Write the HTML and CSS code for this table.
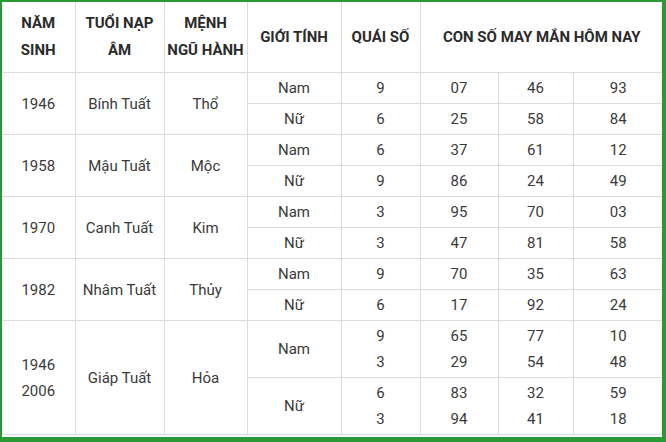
FILE: index.html
```html
<!DOCTYPE html>
<html lang="vi">
<head>
<meta charset="utf-8">
<link rel="stylesheet" href="styles.css">
</head>
<body>
<div class="frame">
<table class="lucky">
  <colgroup>
    <col class="c1"><col class="c2"><col class="c3"><col class="c4"><col class="c5"><col class="c6"><col class="c7"><col class="c8">
  </colgroup>
  <thead>
    <tr>
      <th>NĂM<br>SINH</th>
      <th>TUỔI NẠP<br>ÂM</th>
      <th>MỆNH<br>NGŨ HÀNH</th>
      <th>GIỚI TÍNH</th>
      <th>QUÁI SỐ</th>
      <th colspan="3">CON SỐ MAY MẮN HÔM NAY</th>
    </tr>
  </thead>
  <tbody>
    <tr><td rowspan="2">1946</td><td rowspan="2">Bính Tuất</td><td rowspan="2">Thổ</td><td>Nam</td><td>9</td><td>07</td><td>46</td><td>93</td></tr>
    <tr><td>Nữ</td><td>6</td><td>25</td><td>58</td><td>84</td></tr>
    <tr><td rowspan="2">1958</td><td rowspan="2">Mậu Tuất</td><td rowspan="2">Mộc</td><td>Nam</td><td>6</td><td>37</td><td>61</td><td>12</td></tr>
    <tr><td>Nữ</td><td>9</td><td>86</td><td>24</td><td>49</td></tr>
    <tr><td rowspan="2">1970</td><td rowspan="2">Canh Tuất</td><td rowspan="2">Kim</td><td>Nam</td><td>3</td><td>95</td><td>70</td><td>03</td></tr>
    <tr><td>Nữ</td><td>3</td><td>47</td><td>81</td><td>58</td></tr>
    <tr><td rowspan="2">1982</td><td rowspan="2">Nhâm Tuất</td><td rowspan="2">Thủy</td><td>Nam</td><td>9</td><td>70</td><td>35</td><td>63</td></tr>
    <tr><td>Nữ</td><td>6</td><td>17</td><td>92</td><td>24</td></tr>
    <tr><td rowspan="2">1946<br>2006</td><td rowspan="2">Giáp Tuất</td><td rowspan="2">Hỏa</td><td>Nam</td><td>9<br>3</td><td>65<br>29</td><td>77<br>54</td><td>10<br>48</td></tr>
    <tr><td>Nữ</td><td>6<br>3</td><td>83<br>94</td><td>32<br>41</td><td>59<br>18</td></tr>
  </tbody>
</table>
</div>
</body>
</html>
```

FILE: styles.css
```css
html, body {
  margin: 0;
  padding: 0;
  background: #ffffff;
}
.frame {
  width: 666px;
  height: 442px;
  box-sizing: border-box;
  border: 2px solid #2a9a37;
  border-right-width: 4px;
  border-bottom-width: 5px;
  overflow: hidden;
}
.lucky {
  border-collapse: collapse;
  table-layout: fixed;
  width: 661px;
  font-family: Roboto, "Noto Sans", sans-serif;
  font-size: 15px;
  color: #3a3a3a;
}
.c1 { width: 73px; }
.c2 { width: 89px; }
.c3 { width: 83px; }
.c4 { width: 94px; }
.c5 { width: 79px; }
.c6 { width: 78px; }
.c7 { width: 75px; }
.c8 { width: 90px; }
.lucky th, .lucky td {
  border: 1px solid #dcdcdc;
  text-align: center;
  vertical-align: middle;
  padding: 2px 0;
  line-height: 26px;
}
.lucky tr > :first-child { border-left: none; }
.lucky tr > :last-child { border-right: none; }
.lucky thead th {
  border-top: none;
  font-weight: 700;
  color: #2b2b2b;
  height: 66px;
  padding: 2px 0;
  line-height: 27px;
}
.lucky tbody td {
  height: 26px;
}
```
